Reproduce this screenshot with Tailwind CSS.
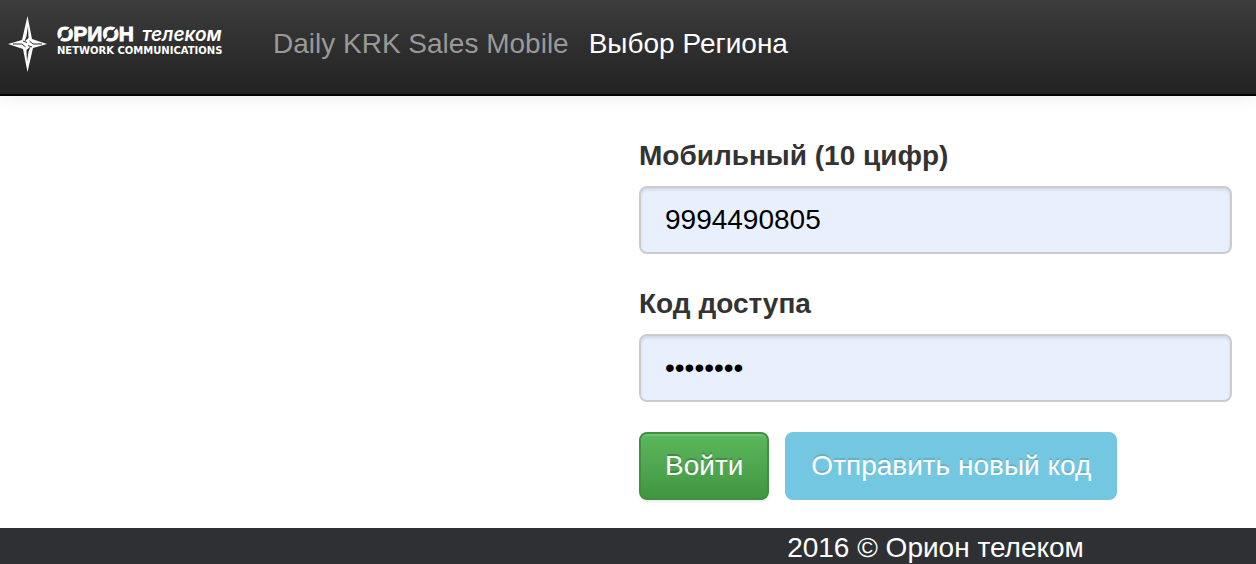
<!DOCTYPE html>
<html lang="ru">
<head>
<meta charset="utf-8">
<meta name="viewport" content="width=device-width, initial-scale=1">
<title>Орион телеком</title>
<script src="https://cdn.jsdelivr.net/npm/@tailwindcss/browser@4"></script>
</head>
<body class="flex min-h-screen flex-col bg-white font-['Liberation_Sans',Arial,sans-serif] text-[28px] leading-9 text-[#333333]">
<header class="flex h-24 items-start border-b-2 border-black bg-linear-to-b from-[#3c3c3c] to-[#222222] shadow-[0_2px_16px_rgba(0,0,0,0.08)]">
  <a href="#" aria-label="Орион телеком" class="block shrink-0 pt-3 pl-1">
    <svg class="block" width="228" height="64" viewBox="4 12 228 64" fill="#ffffff">
      <path d="M27.500 16L32 39L47 44L33 48L27.500 72L23 49L8 44L22 40Z"/>
      <path d="M28 26L28.500 38L24.500 41.500L26.500 36ZM27 62L26.500 50L30.500 46.500L28.500 52Z" fill="#2c2c2c"/>
      <path d="M13 44H22L25.500 47M42 44H33L29.500 41M23 41L27 42.500M32 47L28 45.500" fill="none" stroke="#2c2c2c" stroke-width="1"/>
      <text x="57" y="41" font-family="Liberation Sans, Arial, sans-serif" font-weight="700" font-size="21" stroke="#ffffff" stroke-width="0.8">ОРИОН</text>
      <path d="M59 40L71 27M105 40L117 27" stroke="#313131" stroke-width="1.500"/>
      <text x="142" y="41" font-family="Inter, sans-serif" font-weight="600" font-style="italic" font-size="19">телеком</text>
      <text x="57" y="54" font-family="DejaVu Sans, sans-serif" font-weight="700" font-size="10">NETWORK COMMUNICATIONS</text>
    </svg>
  </a>
  <nav class="flex gap-5 pt-[26px] pl-[41px] whitespace-nowrap">
    <a href="#" class="text-[#999999]">Daily KRK Sales Mobile</a>
    <a href="#" class="text-white">Выбор Региона</a>
  </nav>
</header>
<main class="grid grow grid-cols-2 pt-[42px] pb-7">
  <form class="col-start-2 flex flex-col pr-6 pl-[11px]">
    <label for="phone" class="mb-3 font-bold">Мобильный (10 цифр)</label>
    <input id="phone" type="tel" value="9994490805" class="mb-8 h-[68px] w-full rounded-lg border-2 border-[#cccccc] bg-[#e8f0fe] px-6 text-black shadow-[inset_0_2px_3px_rgba(0,0,0,0.1)]">
    <label for="code" class="mb-3 font-bold">Код доступа</label>
    <input id="code" type="password" value="12345678" class="mb-[30px] h-[68px] w-full rounded-lg border-2 border-[#cccccc] bg-[#e8f0fe] px-6 text-black shadow-[inset_0_2px_3px_rgba(0,0,0,0.1)]">
    <div class="flex gap-4 whitespace-nowrap text-white">
      <button type="submit" class="h-[68px] rounded-lg border-2 border-[#3e8f3e] bg-linear-to-b from-[#5cb85c] to-[#419641] px-6 shadow-[inset_0_2px_0_rgba(255,255,255,0.15),0_2px_2px_rgba(0,0,0,0.075)] text-shadow-[0_-2px_0_rgba(0,0,0,0.2)]">Войти</button>
      <button type="button" disabled class="h-[68px] rounded-lg border-2 border-[#74c7e1] bg-[#74c7e1] px-6 text-shadow-[0_-2px_0_rgba(0,0,0,0.13)]">Отправить новый код</button>
    </div>
  </form>
</main>
<footer class="grid grid-cols-2 bg-[#2f3034] text-white">
  <p class="col-start-2 pt-1 pr-6 pl-[11px] text-center leading-8">2016 © Орион телеком</p>
</footer>
</body>
</html>
